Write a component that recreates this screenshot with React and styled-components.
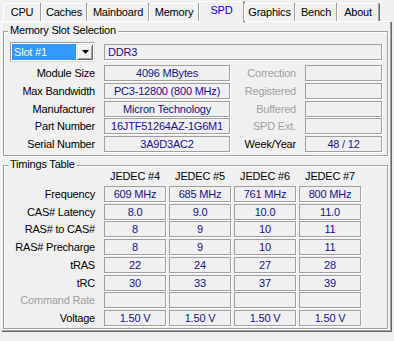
import React from 'react'
import styled, { createGlobalStyle } from 'styled-components'

const GlobalStyle = createGlobalStyle`
  html, body {
    margin: 0;
    padding: 0;
    background: #f0f0f0;
  }
  body {
    font-family: "Liberation Sans", Arial, sans-serif;
    font-size: 11px;
    letter-spacing: -0.2px;
    color: #000;
  }
`

const Window = styled.div`
  width: 394px;
  height: 341px;
  padding-left: 1px;
  box-sizing: border-box;
  background: #f0f0f0;
  overflow: hidden;
`

const TabBar = styled.div`
  display: flex;
  align-items: flex-end;
  height: 21px;
  padding-left: 2px;
  position: relative;
  z-index: 1;
`

const Tab = styled.div`
  box-sizing: border-box;
  width: ${p => p.w}px;
  height: ${p => (p.active ? 21 : 18)}px;
  margin-bottom: ${p => (p.active ? -1 : 0)}px;
  padding-top: 2px;
  border: 1px solid #fff;
  border-bottom: none;
  border-right-color: #a0a0a0;
  border-radius: 2px 2px 0 0;
  box-shadow: 1px 0 0 #696969;
  background: #f0f0f0;
  color: ${p => (p.active ? '#0000ff' : '#000')};
  line-height: 13px;
  text-align: center;
  white-space: nowrap;
`

const Panel = styled.div`
  box-sizing: border-box;
  width: 390px;
  height: 310px;
  border: 1px solid #a0a0a0;
  border-top-color: #fff;
  border-left-color: #fff;
  box-shadow: 1px 1px 0 #696969;
`

const Group = styled.div`
  position: relative;
  box-sizing: border-box;
  width: 385px;
  height: ${p => p.h}px;
  margin: 9px 0 0 1px;
  padding: ${p => p.pt}px 0 0 0;
  border: 1px solid #a0a0a0;
  box-shadow: inset 1px 1px 0 #fff, 1px 1px 0 #fff;
`

const GroupTitle = styled.span`
  position: absolute;
  top: -8px;
  left: 4px;
  padding: 0 2px;
  background: #f0f0f0;
  line-height: 13px;
  white-space: nowrap;
`

const SlotRow = styled.div`
  display: flex;
  align-items: center;
  gap: 9px;
  height: 20px;
  margin-bottom: 3px;
`

const Select = styled.div`
  box-sizing: border-box;
  display: flex;
  align-items: stretch;
  width: 85px;
  height: 20px;
  margin-left: 6px;
  padding: 1px;
  border: 1px solid #a0a0a0;
  border-right-color: #dcdcdc;
  border-bottom-color: #dcdcdc;
  background: #fff;
`

const Selection = styled.div`
  flex: 1;
  padding-left: 2px;
  background: #3399ff;
  color: #fff;
  line-height: 16px;
`

const DropButton = styled.div`
  box-sizing: border-box;
  width: 16px;
  margin-left: 1px;
  display: flex;
  align-items: center;
  justify-content: center;
  background: #f0f0f0;
  border: 1px solid #e3e3e3;
  border-right-color: #696969;
  border-bottom-color: #696969;
  box-shadow: inset 1px 1px 0 #fff, inset -1px -1px 0 #a0a0a0;
`

const InfoGrid = styled.div`
  display: grid;
  grid-template-columns: 91px 126px 57px 77px;
  grid-auto-rows: 16px;
  column-gap: 9px;
  row-gap: 1.75px;
`

const TimingGrid = styled.div`
  display: grid;
  grid-template-columns: 97px repeat(4, 62px);
  grid-auto-rows: 16px;
  column-gap: 3px;
  row-gap: 1.75px;
`

const Label = styled.div`
  line-height: 16px;
  text-align: right;
  padding-right: ${p => p.pr || 0}px;
  white-space: nowrap;
  color: ${p => (p.disabled ? '#a0a0a0' : '#000')};
`

const Head = styled.div`
  line-height: 16px;
  text-align: center;
  white-space: nowrap;
`

const Field = styled.div`
  box-sizing: border-box;
  width: ${p => (p.w ? `${p.w}px` : 'auto')};
  height: 16px;
  padding: 0 3px;
  border: 1px solid #a0a0a0;
  box-shadow: 1px 1px 0 #fff;
  color: #14148a;
  line-height: 14px;
  text-align: ${p => (p.left ? 'left' : 'center')};
  white-space: nowrap;
  overflow: hidden;
`

const tabs = [
  ['CPU', 38],
  ['Caches', 46],
  ['Mainboard', 62],
  ['Memory', 50],
  ['SPD', 45],
  ['Graphics', 51],
  ['Bench', 42],
  ['About', 42],
]

const info = [
  ['Module Size', '4096 MBytes', 'Correction', ''],
  ['Max Bandwidth', 'PC3-12800 (800 MHz)', 'Registered', ''],
  ['Manufacturer', 'Micron Technology', 'Buffered', ''],
  ['Part Number', '16JTF51264AZ-1G6M1', 'SPD Ext.', ''],
  ['Serial Number', '3A9D3AC2', 'Week/Year', '48 / 12', true],
]

const timings = [
  ['Frequency', ['609 MHz', '685 MHz', '761 MHz', '800 MHz']],
  ['CAS# Latency', ['8.0', '9.0', '10.0', '11.0']],
  ['RAS# to CAS#', ['8', '9', '10', '11']],
  ['RAS# Precharge', ['8', '9', '10', '11']],
  ['tRAS', ['22', '24', '27', '28']],
  ['tRC', ['30', '33', '37', '39']],
  ['Command Rate', ['', '', '', ''], true],
  ['Voltage', ['1.50 V', '1.50 V', '1.50 V', '1.50 V']],
]

const Arrow = () => (
  <svg width="7" height="4" viewBox="0 0 7 4">
    <polygon points="0,0 7,0 3.5,4" fill="#000" />
  </svg>
)

export default function App() {
  return (
    <Window>
      <GlobalStyle />
      <TabBar>
        {tabs.map(([name, w]) => (
          <Tab key={name} w={w} active={name === 'SPD'}>
            {name}
          </Tab>
        ))}
      </TabBar>
      <Panel>
        <Group h={125} pt={10}>
          <GroupTitle>Memory Slot Selection</GroupTitle>
          <SlotRow>
            <Select>
              <Selection>Slot #1</Selection>
              <DropButton>
                <Arrow />
              </DropButton>
            </Select>
            <Field w={278} left>DDR3</Field>
          </SlotRow>
          <InfoGrid>
            {info.map(([l1, v1, l2, v2, enabled]) => (
              <React.Fragment key={l1}>
                <Label>{l1}</Label>
                <Field>{v1}</Field>
                <Label disabled={!enabled}>{l2}</Label>
                <Field>{v2}</Field>
              </React.Fragment>
            ))}
          </InfoGrid>
        </Group>
        <Group h={164} pt={2}>
          <GroupTitle>Timings Table</GroupTitle>
          <TimingGrid>
            <div />
            {['JEDEC #4', 'JEDEC #5', 'JEDEC #6', 'JEDEC #7'].map(h => (
              <Head key={h}>{h}</Head>
            ))}
            {timings.map(([label, values, disabled]) => (
              <React.Fragment key={label}>
                <Label pr={6} disabled={disabled}>{label}</Label>
                {values.map((v, i) => (
                  <Field key={i}>{v}</Field>
                ))}
              </React.Fragment>
            ))}
          </TimingGrid>
        </Group>
      </Panel>
    </Window>
  )
}
